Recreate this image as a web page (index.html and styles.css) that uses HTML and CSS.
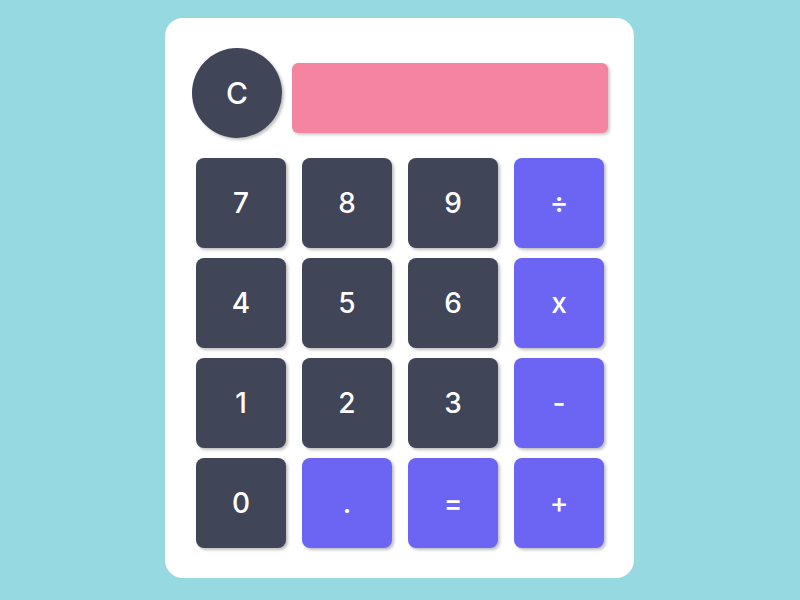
FILE: index.html
```html
<!DOCTYPE html>
<html>
<head>
<meta charset="utf-8">
<link rel="stylesheet" href="styles.css">
</head>
<body>
<div class="calc">
  <div class="top">
    <button class="clear">C</button>
    <div class="display"></div>
  </div>
  <div class="keys">
    <button class="key">7</button>
    <button class="key">8</button>
    <button class="key">9</button>
    <button class="key op">÷</button>
    <button class="key">4</button>
    <button class="key">5</button>
    <button class="key">6</button>
    <button class="key op">x</button>
    <button class="key">1</button>
    <button class="key">2</button>
    <button class="key">3</button>
    <button class="key op">-</button>
    <button class="key">0</button>
    <button class="key op">.</button>
    <button class="key op">=</button>
    <button class="key op">+</button>
  </div>
</div>
</body>
</html>
```
FILE: styles.css
```css
html, body {
  margin: 0;
  padding: 0;
}
body {
  background: #97d9e1;
  width: 800px;
  height: 600px;
  font-family: Inter, "Liberation Sans", sans-serif;
  overflow: hidden;
}
.calc {
  margin: 18px 0 0 165px;
  width: 469px;
  height: 560px;
  box-sizing: border-box;
  background: #fff;
  border-radius: 18px;
  padding: 30px 26px 30px 27px;
}
.top {
  display: flex;
  gap: 10px;
  align-items: flex-start;
  margin-bottom: 20px;
}
.clear {
  width: 90px;
  height: 90px;
  border-radius: 50%;
  border: none;
  background: #404558;
  color: #fff;
  font-family: inherit;
  font-size: 30px;
  font-weight: 500;
  box-shadow: 2px 2px 3px rgba(0,0,0,0.25);
  padding: 0;
}
.display {
  flex: 1;
  height: 70px;
  margin-top: 15px;
  background: #f484a0;
  border-radius: 6px;
  box-shadow: 2px 2px 3px rgba(0,0,0,0.2);
}
.keys {
  display: grid;
  grid-template-columns: repeat(4, 90px);
  grid-auto-rows: 90px;
  column-gap: 16px;
  row-gap: 10px;
  padding: 0 4px;
}
.key {
  border: none;
  border-radius: 8px;
  background: #404558;
  color: #fff;
  font-family: inherit;
  font-size: 28px;
  font-weight: 500;
  padding: 0;
  box-shadow: 2px 2px 3px rgba(0,0,0,0.25);
}
.key.op {
  background: #6c65f3;
}
```
